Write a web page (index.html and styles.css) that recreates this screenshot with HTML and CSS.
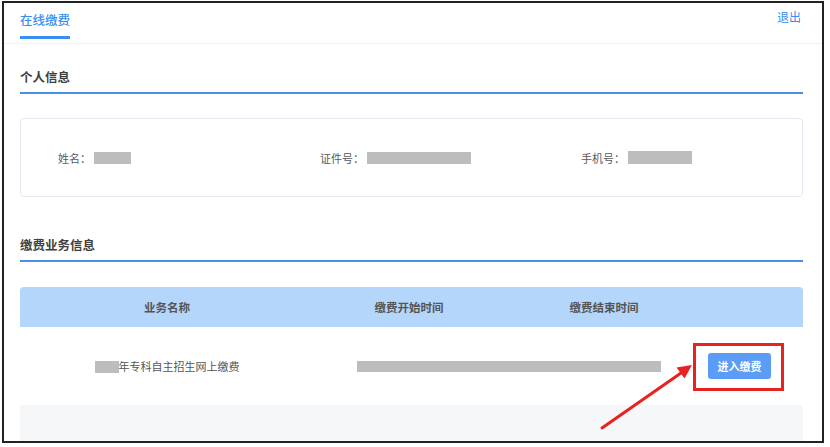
FILE: index.html
```html
<!DOCTYPE html>
<html lang="zh-CN">
<head>
<meta charset="utf-8">
<title>在线缴费</title>
<link rel="stylesheet" href="styles.css">
</head>
<body>
<div class="frame">
  <header class="topbar">
    <div class="tab"><span class="tab-label">在线缴费</span></div>
    <a class="logout">退出</a>
  </header>
  <main class="content">
    <h2 class="section-title section-first">个人信息</h2>
    <div class="info-card">
      <div class="info-item"><span class="label">姓名：</span><span class="mask mask-name"></span></div>
      <div class="info-item"><span class="label">证件号：</span><span class="mask mask-id"></span></div>
      <div class="info-item"><span class="label">手机号：</span><span class="mask mask-phone"></span></div>
    </div>
    <h2 class="section-title section-second">缴费业务信息</h2>
    <div class="table">
      <div class="thead">
        <div class="cell">业务名称</div>
        <div class="cell">缴费开始时间</div>
        <div class="cell">缴费结束时间</div>
        <div class="cell"></div>
      </div>
      <div class="trow">
        <div class="cell name-cell"><span class="mask mask-year"></span><span>年专科自主招生网上缴费</span></div>
        <div class="cell span2"><span class="mask mask-dates"></span></div>
        <div class="cell op-cell"><button class="pay-btn">进入缴费</button></div>
      </div>
      <div class="trow trow-alt"></div>
    </div>
  </main>
  <svg class="annotation" width="830" height="447" viewBox="0 0 830 447">
    <rect x="694.5" y="344.5" width="88" height="45" fill="none" stroke="#e8231f" stroke-width="3"/>
    <line x1="602" y1="428" x2="681" y2="373" stroke="#e8231f" stroke-width="3" stroke-linecap="round"/>
    <polygon points="692,365 684.5,378.5 676.5,367.5" fill="#e8231f"/>
  </svg>
</div>
</body>
</html>
```
FILE: styles.css
```css
html, body {
  margin: 0;
  padding: 0;
  background: #ffffff;
}
body {
  font-family: "Noto Sans CJK SC", "Noto Sans", "Liberation Sans", sans-serif;
  color: #606266;
}
.frame {
  position: relative;
  box-sizing: border-box;
  width: 822px;
  height: 442px;
  margin: 1px 0 0 2px;
  border: 2px solid #222222;
  overflow: hidden;
  background: #ffffff;
}
.topbar {
  display: flex;
  justify-content: space-between;
  align-items: flex-start;
  height: 40px;
  padding: 0 21px 0 16px;
  border-bottom: 1px solid #f0f2f5;
}
.tab {
  padding-top: 3px;
}
.tab-label {
  display: inline-block;
  font-size: 12.5px;
  line-height: 20px;
  font-weight: 500;
  color: #3a8ef0;
  padding-bottom: 6px;
  border-bottom: 3px solid #3a8ef0;
}
.logout {
  padding-top: 4px;
  font-size: 12px;
  line-height: 20px;
  color: #3a8ef0;
  cursor: pointer;
}
.content {
  padding: 0 19px 0 16px;
}
.section-title {
  margin: 0;
  font-size: 12.5px;
  line-height: 20px;
  font-weight: bold;
  color: #3f3f3f;
  padding-bottom: 5px;
  border-bottom: 2px solid #4a8fe4;
}
.section-first {
  margin-top: 23px;
}
.section-second {
  margin-top: 38px;
}
.info-card {
  display: grid;
  grid-template-columns: 262px 261px 1fr;
  align-items: center;
  box-sizing: border-box;
  height: 79px;
  margin-top: 24px;
  padding-left: 37px;
  border: 1px solid #e4eaf2;
  border-radius: 4px;
}
.info-item {
  display: flex;
  align-items: center;
  gap: 3px;
}
.label {
  font-size: 11px;
  line-height: 16px;
  color: #5a5a5a;
}
.mask {
  display: inline-block;
  background: #bdbdbd;
}
.mask-name { width: 37px; height: 12px; }
.mask-id { width: 104px; height: 12px; }
.mask-phone { width: 64px; height: 13px; }
.mask-year { width: 24px; height: 12px; }
.mask-dates { width: 304px; height: 11px; }
.table {
  margin-top: 25px;
}
.thead,
.trow {
  display: grid;
  grid-template-columns: 294px 190px 200px 99px;
}
.thead {
  height: 40px;
  background: #b4d6fb;
  border-radius: 4px 4px 0 0;
}
.thead .cell {
  display: flex;
  align-items: center;
  justify-content: center;
  font-size: 11.5px;
  font-weight: bold;
  color: #555555;
}
.trow {
  height: 78px;
  background: #ffffff;
}
.trow .cell {
  display: flex;
  align-items: center;
  justify-content: center;
  font-size: 11px;
  color: #555555;
}
.name-cell .mask {
  margin-top: 1px;
}
.span2 {
  grid-column: span 2;
}
.op-cell.cell {
  justify-content: flex-start;
  padding-left: 4px;
}
.pay-btn {
  width: 63px;
  height: 26px;
  padding: 0;
  border: none;
  border-radius: 3px;
  background: #5a9cf6;
  color: #ffffff;
  font-family: inherit;
  font-size: 11px;
  font-weight: bold;
  cursor: pointer;
}
.trow-alt {
  height: 60px;
  background: #f6f7f9;
}
.annotation {
  position: absolute;
  left: -4px;
  top: -3px;
  pointer-events: none;
}
```
